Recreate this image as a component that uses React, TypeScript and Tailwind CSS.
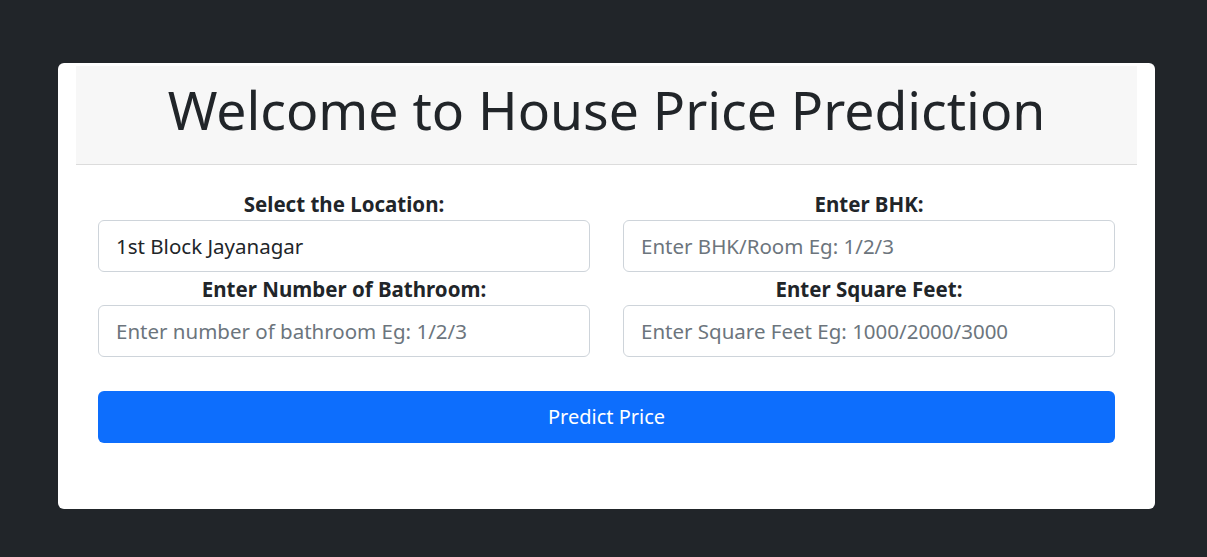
import React from "react";

const font = { fontFamily: '"Noto Sans", "Open Sans", sans-serif' };

function Field({ label, placeholder, value }: { label: string; placeholder?: string; value?: string }) {
  return (
    <div className="flex flex-col items-stretch">
      <label className="pt-[3px] text-center text-[20.5px] font-bold leading-[28px] text-[#212529]">{label}</label>
      <input
        className="mt-[2px] h-[52px] w-full rounded-[6px] border border-[#ced4da] bg-white px-[17px] text-[20.5px] text-[#212529] placeholder:text-[#6c757d] outline-none"
        placeholder={placeholder}
        defaultValue={value}
        style={font}
      />
    </div>
  );
}

export default function App() {
  return (
    <div className="min-h-[557px] w-full bg-[#212529] pt-[63px]" style={font}>
      <div className="ml-[58px] h-[446px] w-[1097px] rounded-[6px] bg-white pt-[3px]">
        <div className="mx-[18px] flex h-[99px] items-center justify-center border-b border-[#dcdcdc] bg-[#f7f7f7] pb-[11px]">
          <h1 className="text-[53.5px] font-normal leading-none text-[#212529]">Welcome to House Price Prediction</h1>
        </div>
        <div className="px-[40px] pt-[22px]">
          <div className="grid grid-cols-2 gap-x-[33px]">
            <Field label="Select the Location:" value="1st Block Jayanagar" />
            <Field label="Enter BHK:" placeholder="Enter BHK/Room Eg: 1/2/3" />
            <Field label="Enter Number of Bathroom:" placeholder="Enter number of bathroom Eg: 1/2/3" />
            <Field label="Enter Square Feet:" placeholder="Enter Square Feet Eg: 1000/2000/3000" />
          </div>
          <button className="mt-[34px] h-[52px] w-full rounded-[6px] bg-[#0d6efd] text-[20px] text-white" style={font}>
            Predict Price
          </button>
        </div>
      </div>
    </div>
  );
}
